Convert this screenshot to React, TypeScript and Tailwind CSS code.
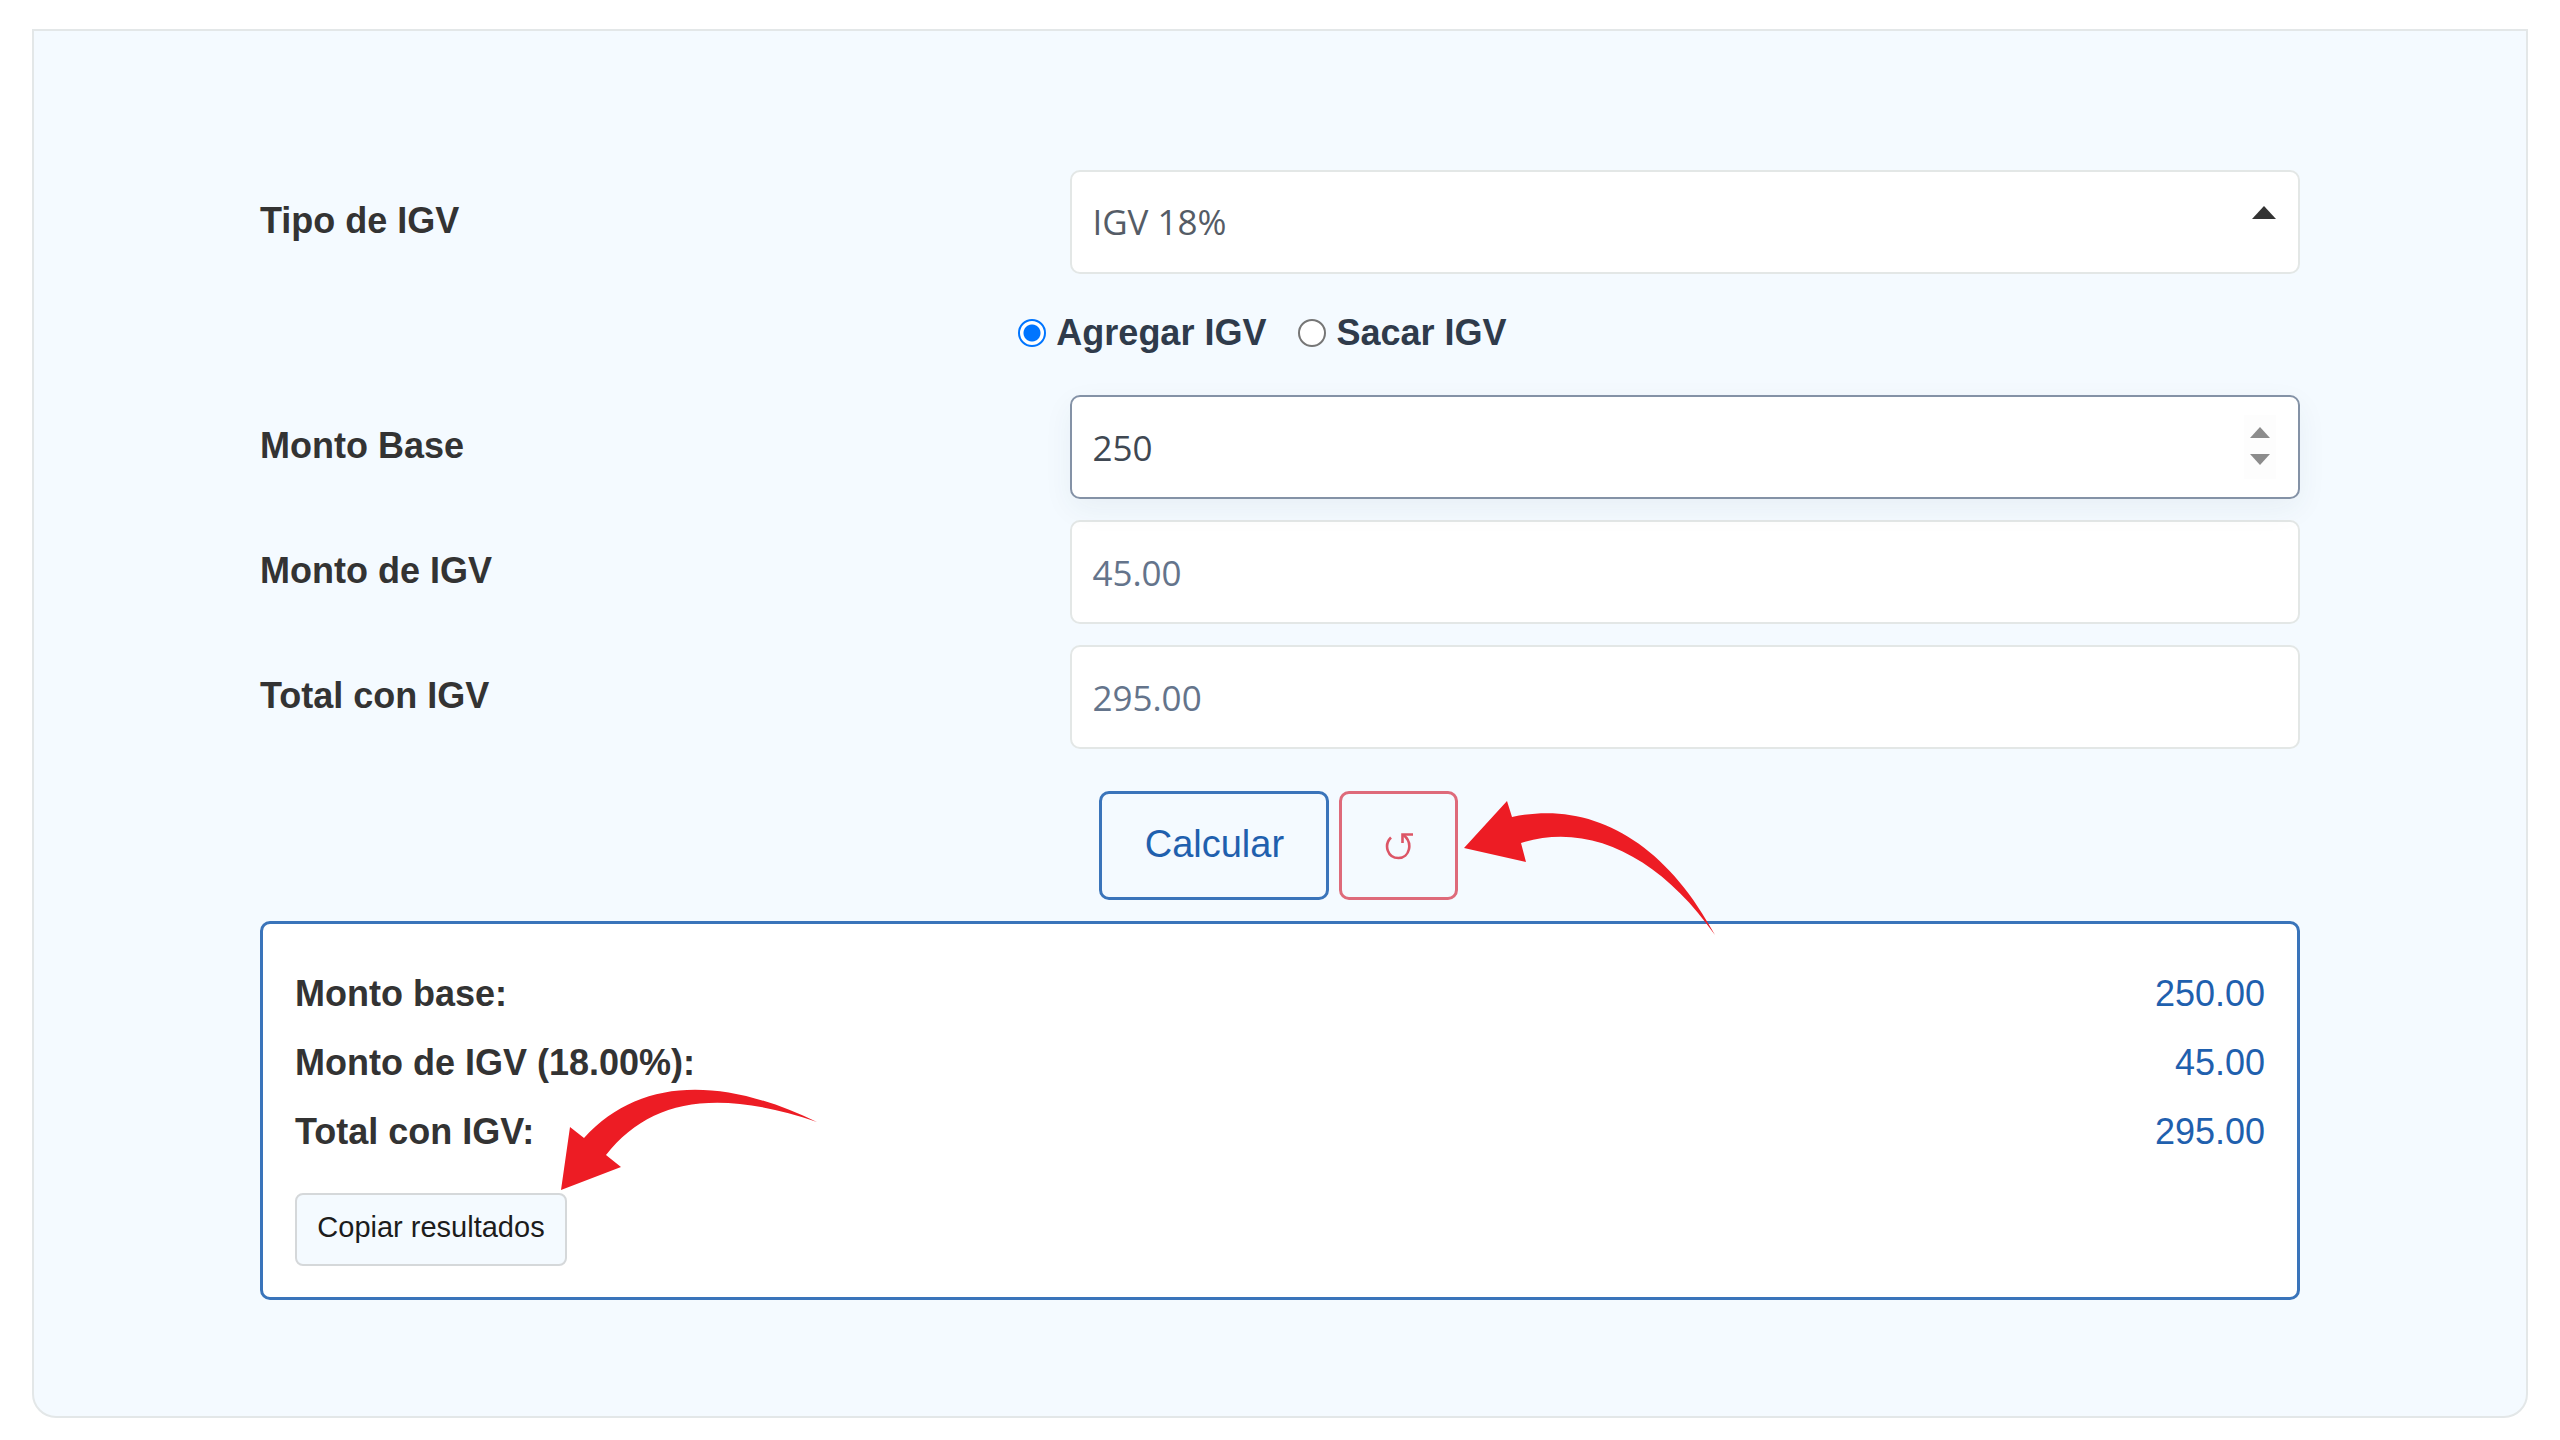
import { useState } from "react";
import clsx from "clsx";

const FIELD =
  "h-26 w-full appearance-none rounded-[10px] border-2 bg-white px-5 font-['Open_Sans','Noto_Sans',sans-serif] text-[35px] outline-none";
const ROW = "grid grid-cols-[810fr_1229fr] items-center";
const LABEL = "pb-0.5 font-bold text-[#333333]";

const RATES = [
  { value: 18, label: "IGV 18%" },
  { value: 10, label: "IGV 10%" },
];

type Mode = "agregar" | "sacar";

function compute(amount: number, rate: number, mode: Mode) {
  const base = mode === "agregar" ? amount : amount / (1 + rate / 100);
  const igv = (base * rate) / 100;
  return { base, igv, total: base + igv };
}

function ModeOption({
  label,
  checked,
  onSelect,
}: {
  label: string;
  checked: boolean;
  onSelect: () => void;
}) {
  return (
    <label className="flex items-center gap-2.5 font-bold text-[#2f3b4b]">
      <input
        type="radio"
        name="modo"
        checked={checked}
        onChange={onSelect}
        className="size-7 appearance-none rounded-full border-2 border-[#767676] bg-white checked:border-[#0075ff] checked:bg-[radial-gradient(circle,#0075ff_8px,#ffffff_9px)]"
      />
      {label}
    </label>
  );
}

function OutputField({ id, label, value }: { id: string; label: string; value: string }) {
  return (
    <div className={ROW}>
      <label htmlFor={id} className={LABEL}>
        {label}
      </label>
      <input
        id={id}
        readOnly
        value={value}
        className={clsx(FIELD, "border-[#e3e7e6] text-[#64748b]")}
      />
    </div>
  );
}

function ResultRow({ label, value }: { label: string; value: string }) {
  return (
    <div className="flex h-[69px] items-center justify-between">
      <dt className="font-bold text-[#333333]">{label}</dt>
      <dd className="text-[#1f60ae]">{value}</dd>
    </div>
  );
}

export default function App() {
  const [rate, setRate] = useState(18);
  const [mode, setMode] = useState<Mode>("agregar");
  const [amount, setAmount] = useState("250");

  const { base, igv, total } = compute(Number(amount) || 0, rate, mode);
  const step = (by: number) => setAmount(String((Number(amount) || 0) + by));

  const copy = () =>
    navigator.clipboard.writeText(
      `Monto base: ${base.toFixed(2)}\nMonto de IGV: ${igv.toFixed(2)}\nTotal con IGV: ${total.toFixed(2)}`,
    );

  return (
    <div className="min-h-screen bg-white px-8 pt-[29px] font-['Liberation_Sans',Arial,sans-serif] text-[36px]">
      <main className="rounded-b-3xl border-2 border-[#e3e7e8] bg-[#f4faff] px-[226px] pt-[139px] pb-[116px]">
        <form onSubmit={(e) => e.preventDefault()}>
          <div className={ROW}>
            <label htmlFor="tipo" className={LABEL}>
              Tipo de IGV
            </label>
            <div className="relative">
              <select
                id="tipo"
                value={rate}
                onChange={(e) => setRate(Number(e.target.value))}
                className={clsx(FIELD, "border-[#e3e7e6] text-[#555c66]")}
              >
                {RATES.map((r) => (
                  <option key={r.value} value={r.value}>
                    {r.label}
                  </option>
                ))}
              </select>
              <svg
                viewBox="0 0 24 13"
                className="pointer-events-none absolute top-9 right-6 h-[13px] w-6 fill-[#333333]"
              >
                <path d="M12 0 24 13H0z" />
              </svg>
            </div>
          </div>

          <div className="grid h-[121px] grid-cols-[758fr_1281fr] items-center pb-1">
            <div className="col-start-2 flex gap-8">
              <ModeOption
                label="Agregar IGV"
                checked={mode === "agregar"}
                onSelect={() => setMode("agregar")}
              />
              <ModeOption
                label="Sacar IGV"
                checked={mode === "sacar"}
                onSelect={() => setMode("sacar")}
              />
            </div>
          </div>

          <div className="space-y-[21px]">
            <div className={ROW}>
              <label htmlFor="base" className={LABEL}>
                Monto Base
              </label>
              <div className="relative">
                <input
                  id="base"
                  inputMode="decimal"
                  value={amount}
                  onChange={(e) => setAmount(e.target.value)}
                  className={clsx(
                    FIELD,
                    "border-[#8492a6] text-[#404852] shadow-[0_10px_30px_rgba(40,70,90,0.06)]",
                  )}
                />
                <div className="absolute inset-y-5 right-6 flex w-8 flex-col items-center justify-center gap-4 bg-[#fdfdfd] pb-0.5">
                  <button type="button" aria-label="Aumentar" onClick={() => step(1)}>
                    <svg viewBox="0 0 20 11" className="h-[11px] w-5 fill-[#8c8c8c]">
                      <path d="M10 0 20 11H0z" />
                    </svg>
                  </button>
                  <button type="button" aria-label="Disminuir" onClick={() => step(-1)}>
                    <svg viewBox="0 0 20 11" className="h-[11px] w-5 fill-[#8c8c8c]">
                      <path d="M0 0H20L10 11z" />
                    </svg>
                  </button>
                </div>
              </div>
            </div>
            <OutputField id="igv" label="Monto de IGV" value={igv.toFixed(2)} />
            <OutputField id="total" label="Total con IGV" value={total.toFixed(2)} />
          </div>

          <div className={clsx(ROW, "mt-[42px]")}>
            <div className="col-start-2 flex gap-2.5 pl-[29px]">
              <button
                type="submit"
                className="h-[109px] w-[230px] rounded-[10px] border-[3px] border-[#3a74ba] pb-0.5 text-[38px] text-[#1f60ae]"
              >
                Calcular
              </button>
              <div className="relative">
                <button
                  type="button"
                  aria-label="Reiniciar"
                  onClick={() => setAmount("")}
                  className="flex h-[109px] w-[119px] items-center justify-center rounded-[10px] border-[3px] border-[#de6a7a]"
                >
                  <svg
                    viewBox="0 0 28 28"
                    className="size-7 fill-none stroke-[#dc5566] stroke-[2.6]"
                  >
                    <path d="M6 5.500C-1.500 13 2.500 26 13.500 26S28.500 11 18.500 3" />
                    <path d="M17.500 11V2.500H28" />
                  </svg>
                </button>
                <svg
                  viewBox="1463 800 253 136"
                  className="pointer-events-none absolute top-[9px] left-[124px] h-[136px] w-[253px] max-w-none fill-[#ed1c24]"
                >
                  <path d="M1464 848 1507 801 1512 817C1590 800 1664 840 1715 935 1661 858 1590 821 1521 843L1526 862z" />
                </svg>
              </div>
            </div>
          </div>
        </form>

        <section className="mt-[21px] rounded-[10px] border-[3px] border-[#3a74ba] bg-white px-8 pt-[35px] pb-[31px]">
          <dl>
            <ResultRow label="Monto base:" value={base.toFixed(2)} />
            <ResultRow label={`Monto de IGV (${rate.toFixed(2)}%):`} value={igv.toFixed(2)} />
            <ResultRow label="Total con IGV:" value={total.toFixed(2)} />
          </dl>
          <div className="relative mt-[27px] w-fit">
            <button
              type="button"
              onClick={copy}
              className="block h-[73px] w-[272px] rounded-lg border-2 border-[#d5d8da] bg-[#f4faff] pb-1 text-[29px] text-[#1c1c1c]"
            >
              Copiar resultados
            </button>
            <svg
              viewBox="561 1089 257 102"
              className="pointer-events-none absolute -top-26 left-[266px] h-[102px] w-[257px] max-w-none fill-[#ed1c24]"
            >
              <path d="M561 1190 570 1127 584 1138C640 1076 724 1077 817 1122 717 1088 650 1099 606 1155L621 1167z" />
            </svg>
          </div>
        </section>
      </main>
    </div>
  );
}
